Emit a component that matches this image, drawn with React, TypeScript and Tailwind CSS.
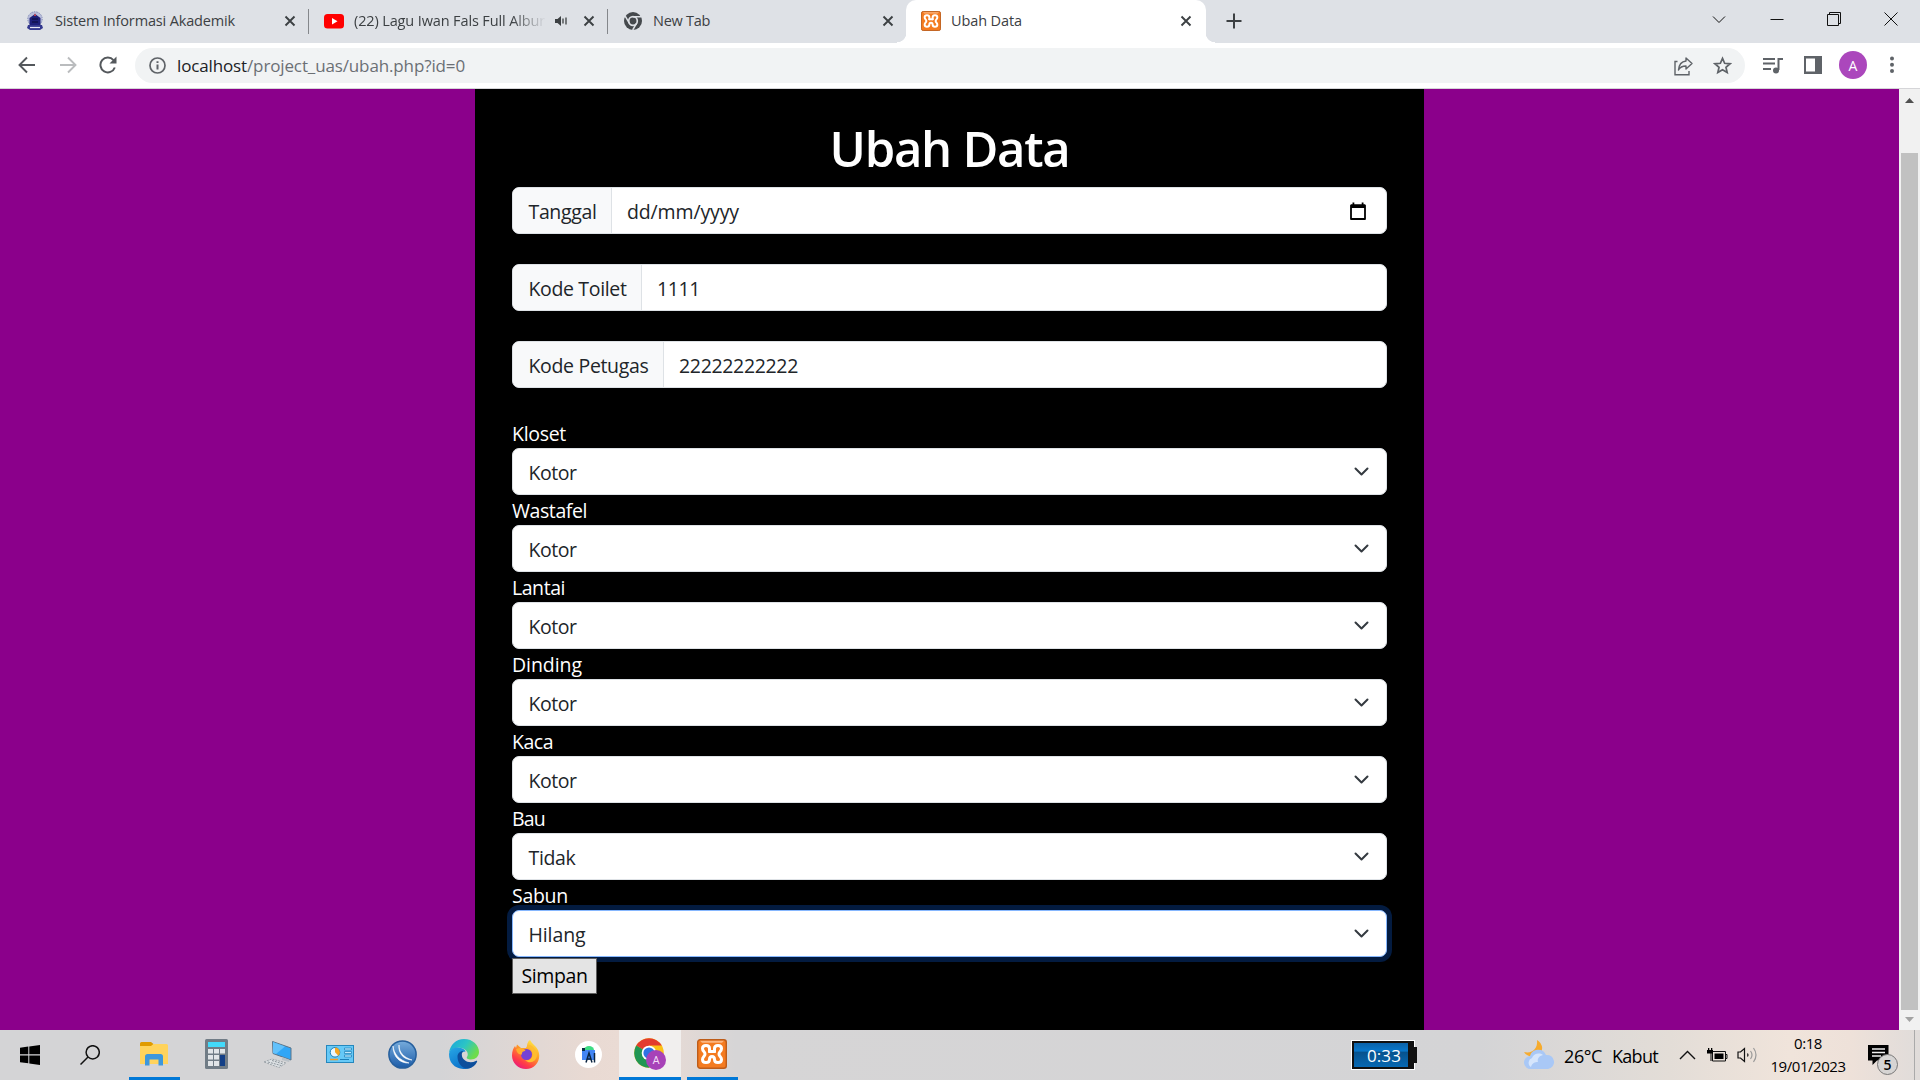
import { useLayoutEffect, useRef, useState, type ReactNode } from "react";

/** Single-line text whose tracking is adjusted so that it spans `w` pixels. */
function Fit({ w, children, className = "" }: { w: number; children: string; className?: string }) {
  const ref = useRef<HTMLSpanElement>(null);
  const [spacing, setSpacing] = useState(0);
  useLayoutEffect(() => {
    if (ref.current) {
      const natural = ref.current.getBoundingClientRect().width;
      setSpacing((w - natural) / children.length);
    }
  }, []);
  return (
    <span ref={ref} className={`inline-block whitespace-pre ${className}`} style={{ letterSpacing: spacing }}>
      {children}
    </span>
  );
}

function Close() {
  return (
    <svg width="12" height="12" viewBox="0 0 12 12" stroke="#3c4043" strokeWidth="1.9">
      <path d="M1.5 1.5l9 9M10.5 1.5l-9 9" />
    </svg>
  );
}

function CampusIcon() {
  return (
    <svg width="18" height="20" viewBox="0 0 18 20">
      <circle cx="9" cy="8" r="7.2" fill="#b9bfdc" stroke="#7d86b5" strokeDasharray="1.5 1" />
      <path d="M3.5 7l5.500-4 5.500 4v8h-11z" fill="#1d1f78" />
      <path d="M9 2l1 3H8z" fill="#d44" />
      <path d="M2 14h14l1 3-3 2H4l-3-2z" fill="#34398f" />
      <path d="M4 16.500h10" stroke="#e8e8f5" strokeWidth="1.200" />
      <path d="M6 8h6M6 11h6" stroke="#10124d" strokeWidth="1.500" />
    </svg>
  );
}

function YoutubeIcon() {
  return (
    <svg width="20" height="15" viewBox="0 0 20 15">
      <rect width="20" height="14.500" rx="3.500" fill="#f00" />
      <path d="M8 4l5.500 3.200L8 10.500z" fill="#fff" />
    </svg>
  );
}

function ChromeGrey() {
  return (
    <svg width="18" height="18" viewBox="0 0 18 18">
      <circle cx="9" cy="9" r="9" fill="#45494d" />
      <circle cx="9" cy="9" r="4.300" fill="#45494d" stroke="#dee1e6" strokeWidth="1.700" />
      <path d="M9 4.700h8.200M5.300 11.200L1.200 4.100M12.700 11.200L8.700 18" stroke="#dee1e6" strokeWidth="1.500" />
    </svg>
  );
}

function Xampp({ size }: { size: number }) {
  return (
    <svg width={size} height={size} viewBox="0 0 30 30">
      <rect x="0.700" y="0.700" width="28.600" height="28.600" rx="2.500" fill="#f47b20" stroke="#bd5c19" strokeWidth="1.400" />
      <path d="M3 1.800h24l-2 2H5z" fill="#ffc9a0" opacity=".75" />
      <g fill="none" stroke="#fff" strokeWidth="3" strokeLinecap="round" strokeLinejoin="round">
        <path d="M12.500 12.500V9.500C12.500 5.500 5.500 5.500 5.500 9.500c0 3 2.500 3 2.500 5.500s-2.500 2.500-2.500 5.500c0 4 7 4 7 0 0-2 .5-3 2.500-3s2.500 1 2.500 3c0 4 7 4 7 0 0-3-2.500-3-2.500-5.500s2.500-2.500 2.500-5.500c0-4-7-4-7 0v3" />
        <path d="M12.500 12.500h5" />
      </g>
    </svg>
  );
}

function Tab({ icon, children, trailing }: { icon: ReactNode; children: ReactNode; trailing?: ReactNode }) {
  return (
    <div className="flex h-full w-[299px] shrink-0 items-center pl-[15px] pr-[13px]">
      <div className="flex w-5 justify-center">{icon}</div>
      <div className="ml-2.5 flex min-w-0 flex-1 items-center overflow-hidden leading-5">{children}</div>
      {trailing}
      <Close />
    </div>
  );
}

function TabStrip() {
  return (
    <div className="flex h-[43px] bg-[#dee1e6] pl-2.5 text-[14.500px] text-[#3c4043]">
      <div className="flex h-[42px] w-[299px] items-center">
        <Tab icon={<CampusIcon />}><Fit w={180}>Sistem Informasi Akademik</Fit></Tab>
      </div>
      <div className="-ml-px flex h-[42px] w-[300px] items-center">
        <div className="h-[25px] w-px shrink-0 bg-[#84878b]" />
        <Tab
          icon={<YoutubeIcon />}
          trailing={
            <svg className="ml-2 mr-[15px]" width="14" height="14" viewBox="0 0 14 14" fill="none" stroke="#3c4043" strokeWidth="1.300">
              <path d="M1 5v4h2.500L7 12V2L3.500 5z" fill="#3c4043" stroke="none" />
              <path d="M9 4.500v5M12 3.500v7" />
            </svg>
          }
        >
          <div className="w-[193px] [mask-image:linear-gradient(to_right,black_82%,transparent)]">
            <Fit w={191}>(22) Lagu Iwan Fals Full Albur</Fit>
          </div>
        </Tab>
      </div>
      <div className="-ml-px flex h-[42px] w-[300px] items-center">
        <div className="h-[25px] w-px shrink-0 bg-[#84878b]" />
        <Tab icon={<ChromeGrey />}><Fit w={57}>New Tab</Fit></Tab>
      </div>
      <div className="-ml-2.5 flex h-[43px] items-end">
        <div className="h-2.5 w-[9px] bg-[radial-gradient(circle_at_0_0,transparent_9px,white_9.500px)]" />
        <div className="h-[43px] w-[300px] rounded-t-[10px] bg-white pb-px">
          <Tab icon={<Xampp size={20} />}><Fit w={71}>Ubah Data</Fit></Tab>
        </div>
        <div className="h-2.5 w-[9px] bg-[radial-gradient(circle_at_100%_0,transparent_9px,white_9.500px)]" />
      </div>
      <svg className="ml-[11px] mt-[13px]" width="16" height="16" viewBox="0 0 16 16" stroke="#3c4043" strokeWidth="2">
        <path d="M8 0.500v15M0.500 8h15" />
      </svg>
      <div className="ml-auto flex h-[37px] items-center">
        {[
          <path key="v" d="M1 4.500l6 6 6-6" />,
          <path key="m" d="M0.500 7.500h13" />,
          <path key="r" d="M0.500 2.500h11v11h-11zM2.500 2.500v-2h11v11h-2" />,
          <path key="c" d="M0.500 0.500l13 13M13.500 0.500l-13 13" />,
        ].map((shape, i) => (
          <div key={i} className="flex w-[57.300px] justify-center">
            <svg width="14" height="14" viewBox="0 0 14 14" fill="none" stroke="#111">{shape}</svg>
          </div>
        ))}
      </div>
    </div>
  );
}

function Toolbar() {
  return (
    <div className="flex h-[46px] items-center border-b border-[#d5d5d8] bg-white pb-px">
      <svg className="ml-[18px]" width="18" height="18" viewBox="0 0 18 18" fill="none" stroke="#54585c" strokeWidth="1.900">
        <path d="M17 9H2M9 1.500L1.500 9 9 16.500" />
      </svg>
      <svg className="ml-[23px]" width="18" height="18" viewBox="0 0 18 18" fill="none" stroke="#babcbe" strokeWidth="1.900">
        <path d="M1 9h15M9 1.500L16.500 9 9 16.500" />
      </svg>
      <svg className="ml-[22px]" width="18" height="18" viewBox="0 0 18 18" fill="none" stroke="#54585c" strokeWidth="2">
        <path d="M15.800 11.500A7.400 7.400 0 1 1 14.500 4.200" />
        <path d="M17.500 0.500v7h-7z" fill="#54585c" stroke="none" />
      </svg>
      <div className="ml-[18px] flex h-[35px] w-[1610px] items-center rounded-full bg-[#f1f3f4] pl-[14px] pr-[13px]">
        <svg width="17" height="17" viewBox="0 0 17 17" fill="none" stroke="#5f6368" strokeWidth="1.700">
          <circle cx="8.500" cy="8.500" r="7.500" />
          <path d="M8.500 7.500v5M8.500 4.200v1.900" strokeWidth="2" />
        </svg>
        <div className="ml-[11px] pt-0.5 text-[17px] leading-6">
          <Fit w={70} className="text-[#202124]">localhost</Fit>
          <Fit w={218} className="text-[#6b6f74]">/project_uas/ubah.php?id=0</Fit>
        </div>
        <svg className="ml-auto mt-0.5" width="19" height="19" viewBox="0 0 19 19" fill="none" stroke="#5f6368" strokeWidth="1.400">
          <path d="M3.500 4.500H1v13.300h14V14" />
          <path d="M12 1l6 5.500-6 5.500V9C8 9 6 10 4.500 13 5 7 8 4.500 12 4z" strokeLinejoin="round" />
        </svg>
        <svg className="ml-5" width="19" height="19" viewBox="0 0 24 24" fill="none" stroke="#5f6368" strokeWidth="2.200">
          <path d="M12 3l2.700 6.200 6.800.6-5.100 4.500 1.500 6.600L12 17.500l-5.900 3.400 1.500-6.600-5.100-4.500 6.800-.6z" />
        </svg>
      </div>
      <svg className="ml-[18px]" width="20" height="17" viewBox="0 0 20 17" fill="none" stroke="#5f6368" strokeWidth="2">
        <path d="M0 2h12M0 6.500h12M0 12h8M15.500 13V2H20" />
        <circle cx="13" cy="13.500" r="3" fill="#5f6368" stroke="none" />
      </svg>
      <svg className="ml-[21px]" width="18" height="18" viewBox="0 0 18 18">
        <path d="M0 0h18v18H0z" fill="#5f6368" />
        <path d="M2 2.500h9v13H2z" fill="#fff" />
      </svg>
      <div className="ml-[17px] flex size-7 items-center justify-center rounded-full bg-[#ab47bc] text-[14px] font-medium text-white">A</div>
      <svg className="ml-[22px]" width="6" height="18" viewBox="0 0 6 18" fill="#5f6368">
        <circle cx="3" cy="2.500" r="2" />
        <circle cx="3" cy="8.700" r="2" />
        <circle cx="3" cy="15" r="2" />
      </svg>
    </div>
  );
}

function InputGroup({ label, lw, boxClass, value, vw, icon }: { label: string; lw: number; boxClass: string; value: string; vw: number; icon?: ReactNode }) {
  return (
    <div className="mb-[30px] flex h-[47px] overflow-hidden rounded-[7px] border border-[#dee2e6] bg-white text-[#212529]">
      <div className={`flex items-center border-r border-[#dee2e6] bg-[#f8f9fa] pl-[15.500px] pt-0.5 ${boxClass}`}>
        <Fit w={lw}>{label}</Fit>
      </div>
      <div className="flex flex-1 items-center pl-[15px] pr-[19px] pt-0.5">
        <Fit w={vw}>{value}</Fit>
        <div className="ml-auto pb-px">{icon}</div>
      </div>
    </div>
  );
}

function SelectField({ label, lw, value, vw, focused }: { label: string; lw: number; value: string; vw: number; focused?: boolean }) {
  return (
    <div>
      <div className="h-[30px] pt-px text-white"><Fit w={lw}>{label}</Fit></div>
      <div
        className={`flex h-[47px] items-center rounded-[7px] border bg-white pl-[15.500px] pr-[17.500px] text-[#212529] ${
          focused ? "border-[#86b7fe] shadow-[0_0_0_5px_#031b40]" : "border-[#dee2e6]"
        }`}
      >
        <Fit w={vw} className="pt-0.5">{value}</Fit>
        <svg className="ml-auto" width="15" height="9" viewBox="0 0 15 9" fill="none" stroke="#343a40" strokeWidth="2" strokeLinecap="round" strokeLinejoin="round">
          <path d="M1.500 1.500l6 6 6-6" />
        </svg>
      </div>
    </div>
  );
}

const selects = [
  { label: "Kloset", lw: 54, value: "Kotor", vw: 48 },
  { label: "Wastafel", lw: 75, value: "Kotor", vw: 48 },
  { label: "Lantai", lw: 53, value: "Kotor", vw: 48 },
  { label: "Dinding", lw: 70, value: "Kotor", vw: 48 },
  { label: "Kaca", lw: 41, value: "Kotor", vw: 48 },
  { label: "Bau", lw: 33, value: "Tidak", vw: 47 },
  { label: "Sabun", lw: 56, value: "Hilang", vw: 57, focused: true },
];

function Page() {
  return (
    <div className="flex h-[941px] bg-[#8b008b]">
      <div className="ml-[475px] w-[949px] bg-black px-[37px] pt-[29px] text-[19.500px] leading-[30px]">
        <h1 className="mb-[9px] text-center text-[49px] font-semibold leading-[60px] text-white">
          <Fit w={240}>Ubah Data</Fit>
        </h1>
        <InputGroup
          label="Tanggal" lw={68} boxClass="w-[99px]" value="dd/mm/yyyy" vw={112}
          icon={
            <svg width="18" height="19" viewBox="0 0 18 19">
              <path d="M2 3.500h14v13.500H2z" fill="none" stroke="#000" strokeWidth="1.800" strokeLinejoin="round" />
              <path d="M2 2.500h14V6H2zM3.500 0.500h1.800v2H3.500zM12.700 0.500h1.800v2h-1.800z" />
            </svg>
          }
        />
        <InputGroup label="Kode Toilet" lw={98} boxClass="w-[129px]" value="1111" vw={43} />
        <InputGroup label="Kode Petugas" lw={120} boxClass="w-[151px]" value="22222222222" vw={119} />
        {selects.map((s) => <SelectField key={s.label} {...s} />)}
        <button className="relative mt-px flex h-9 w-[85px] items-center justify-center border border-[#5f5f5f] bg-[#e4e4e4] text-black">
          <Fit w={66}>Simpan</Fit>
        </button>
      </div>
      <div className="ml-auto flex w-[21px] flex-col items-center bg-[#f1f1f1]">
        <svg className="mt-[9px]" width="9" height="5" viewBox="0 0 9 5"><path d="M0 5l4.500-5L9 5z" fill="#505050" /></svg>
        <div className="mt-[50px] h-[857px] w-[17px] bg-[#c1c1c1]" />
        <svg className="mt-[7px]" width="9" height="5" viewBox="0 0 9 5"><path d="M0 0h9L4.500 5z" fill="#a3a3a3" /></svg>
      </div>
    </div>
  );
}

const FolderIcon = () => (
  <svg width="28" height="24" viewBox="0 0 28 24">
    <path d="M0 1.500Q0 0 1.500 0H11l2.500 2-2 3H0z" fill="#e09b00" />
    <path d="M0 4h11l2.500-2H26.500Q28 2 28 3.500V22H0z" fill="#ffd35c" />
    <path d="M5 23.500V14.500Q5 12 7.500 12h13Q23 12 23 14.500v9h-4.500v-6h-9v6z" fill="#3d97dc" />
  </svg>
);

const CalculatorIcon = () => (
  <svg width="23" height="30" viewBox="0 0 23 30">
    <rect width="23" height="30" rx="1.500" fill="#707c86" />
    <path d="M3 3h17v5H3z" fill="#42dafa" />
    <path d="M3 10h5v4.500H3zM9 10h5v4.500H9zM15 10h5v4.500h-5zM3 16h5v4.500H3zM9 16h5v4.500H9zM3 22h5v5H3zM9 22h5v5H9z" fill="#e1e5e8" />
    <path d="M15 16h5v11h-5z" fill="#123f87" />
  </svg>
);

const ComputerIcon = () => (
  <svg width="28" height="27" viewBox="0 0 28 27">
    <path d="M8.500 0.500L27 7v12L9 12.500z" fill="#31a6f6" stroke="#5d7488" />
    <path d="M9 1L21 5.500 12 13l-3-1z" fill="#62c1fb" />
    <path d="M18 16v3l7 2 1-2z" fill="#b9c1c8" />
    <path d="M0 21l8-3 14 4-7 4.500z" fill="#dfe3e6" stroke="#8b949b" strokeWidth=".8" strokeDasharray="2 1" />
    <path d="M4 21l13 3.500M8 19.500l11 3.500" stroke="#8b949b" strokeDasharray="2 1" />
  </svg>
);

const ControlPanelIcon = () => (
  <svg width="28" height="18" viewBox="0 0 28 18">
    <rect x=".5" y=".5" width="27" height="17" fill="#66c9f7" stroke="#2587bd" />
    <circle cx="9" cy="7.300" r="4.800" fill="#e9f6fd" stroke="#1c7fb8" />
    <path d="M9 7.300V2.500A4.800 4.800 0 0 1 12.400 10.700z" fill="#f5a623" />
    <path d="M18.500 3h7v2h-7zM18.500 6.500h7v2h-7zM18.500 10h7v2h-7z" fill="#bfe8fc" stroke="#1c7fb8" strokeWidth=".7" />
    <path d="M4 14.500h8" stroke="#f59a23" strokeWidth="1.500" />
    <path d="M14 14.500h9" stroke="#1c7fb8" />
  </svg>
);

const LinuxProxyIcon = () => (
  <svg width="29" height="29" viewBox="0 0 29 29">
    <defs>
      <linearGradient id="orb" x1="0" y1="0" x2="0" y2="1"><stop stopColor="#77acdc" /><stop offset="1" stopColor="#1b5ba8" /></linearGradient>
    </defs>
    <circle cx="14.500" cy="14.500" r="13.600" fill="url(#orb)" stroke="#265f9d" strokeWidth="1.500" />
    <path d="M5 6c1 8 6 14 16 17-8 .5-16-5-16-17z" fill="#fff" stroke="#fff" strokeWidth=".6" />
    <path d="M11 5c0 7 4 12 13 15-8-.5-14-6-13-15z" fill="#fff" stroke="#fff" strokeWidth=".6" />
  </svg>
);

const EdgeIcon = () => (
  <svg width="30" height="30" viewBox="0 0 30 30">
    <defs>
      <linearGradient id="edgeTop" x1="0" y1="0" x2="1" y2=".5"><stop stopColor="#18a3df" /><stop offset=".55" stopColor="#2cc5c4" /><stop offset="1" stopColor="#6edc4b" /></linearGradient>
      <linearGradient id="edgeLeft" x1="0" y1="0" x2=".6" y2="1"><stop stopColor="#27a7e5" /><stop offset="1" stopColor="#0a6fc9" /></linearGradient>
    </defs>
    <path d="M0 14C1 6 7 0 15 0c9 0 15 6.500 15 13 0 4.500-3.500 7.500-8 7.500-3 0-5-1-4-2.500C20 15 18 10 12 9 7 8 2 10 0 14z" fill="url(#edgeTop)" />
    <path d="M0 15C1 9 7 7.500 12 9c3 1 4.500 2.500 4.500 3.500-4 0-5.500 3-4.500 7 1 5 5 8 11 8.500-3 2-6 2-8.500 2C5 29.500 0 23 0 15z" fill="url(#edgeLeft)" />
    <path d="M8.500 17.500c0 6 4 12 10 12 5-.5 8-3.500 9.500-6.500.5-1-.3-1.500-1.200-1-6 3-14 0-14-6.500 0-1.500.6-2.500 1.500-3.500-3.500 0-5.800 2.500-5.800 5.500z" fill="#0c4e9c" />
  </svg>
);

const FirefoxIcon = () => (
  <svg width="28" height="29" viewBox="0 0 28 29">
    <defs>
      <linearGradient id="fox" x1=".8" y1="0" x2=".2" y2="1"><stop stopColor="#fff04a" /><stop offset=".4" stopColor="#ff9c25" /><stop offset=".75" stopColor="#ff3b48" /><stop offset="1" stopColor="#e31587" /></linearGradient>
    </defs>
    <path d="M18 0c2 4 6 6 8 10 4 9-2 19-12 19C6 29 0 23 0 15.500 0 11 1.500 8 3 6l1 2 1-3.500L9 8h5l1-2c0-2 1-5 3-6z" fill="url(#fox)" />
    <circle cx="14.500" cy="14.500" r="5.500" fill="#7542d5" />
    <path d="M4 9c4-2 8-1 9.500 2-2 0-4 1-3.500 3.500-3 0-5-1-6-5.500z" fill="#ffab2e" />
    <path d="M15 6c3 1 6 4 5.500 9C20 19 17 21 13 20c5 5 12 1 12-5 0-4-3-8-7-10z" fill="#ffbd2f" />
  </svg>
);

const AndroidStudioIcon = () => (
  <svg width="27" height="27" viewBox="0 0 27 27">
    <circle cx="13.500" cy="13.500" r="13.500" fill="#fff" />
    <path d="M9 9a5 4 0 0 1 10 0z" fill="#3ddc84" />
    <path d="M7 9h13v10H7z" fill="#4285f4" />
    <path d="M7 7h3v3H7z" fill="#083042" />
    <g stroke="#0b2540" strokeWidth="1.500" fill="none"><path d="M11 21.500L14 12l3 9.500M12 18h4M19.500 12v9.500" /></g>
  </svg>
);

const ChromeIcon = () => (
  <svg width="32" height="32" viewBox="0 0 32 32">
    <circle cx="15" cy="15" r="14.800" fill="#fbc116" />
    <path d="M15 15L2.200 7.600A14.800 14.800 0 0 1 27.800 7.600H15z" fill="#e33b2e" />
    <path d="M15 15L2.200 7.600A14.800 14.800 0 0 0 15 29.800l6.400-11z" fill="#219653" />
    <circle cx="15" cy="15" r="7.300" fill="#fff" />
    <circle cx="15" cy="15" r="5.600" fill="#2f73e4" />
    <circle cx="22" cy="22" r="10" fill="#a742b8" />
    <text x="22" y="26" textAnchor="middle" fontSize="11" fill="#f3dcf6" fontFamily="Roboto">A</text>
  </svg>
);

function TaskButton({ children, open, active }: { children: ReactNode; open?: boolean; active?: boolean }) {
  return (
    <div className={`flex h-[50px] w-[62px] flex-col items-center ${active ? "bg-[#f1efee]" : ""}`}>
      <div className="flex h-[47px] items-center pt-px">{children}</div>
      {(open || active) && <div className={`h-[3px] bg-[#0078d7] ${active ? "w-full" : "w-[51px]"}`} />}
    </div>
  );
}

function Taskbar() {
  return (
    <div className="flex h-[50px] items-center bg-[linear-gradient(90deg,#d4d4d6_0,#d4d4d6_440px,#e9dad3_590px,#ebdcd5_650px,#d6d5d6_735px,#d4d4d6_1480px,#e3ddd7_1670px,#f0e4db_1790px,#eee1d9_1850px,#e0dcda_1920px)] text-[18px] text-black">
      <div className="flex w-[60px] justify-center">
        <svg width="20" height="20" viewBox="0 0 20 20"><path d="M0 2.800L8.300 1.600V9.300H0zM9.300 1.400L20 0v9.300H9.300zM0 10.400h8.300v7.900L0 17.200zM9.300 10.400H20V20L9.300 18.500z" /></svg>
      </div>
      <div className="flex w-[60px] justify-center">
        <svg width="20" height="20" viewBox="0 0 20 20" fill="none" stroke="#111" strokeWidth="1.500"><circle cx="12.700" cy="7.300" r="6.600" /><path d="M8 12L.5 19.500" /></svg>
      </div>
      <div className="ml-[3px] flex">
        <TaskButton open><FolderIcon /></TaskButton>
        <TaskButton><CalculatorIcon /></TaskButton>
        <TaskButton><ComputerIcon /></TaskButton>
        <TaskButton><ControlPanelIcon /></TaskButton>
        <TaskButton><LinuxProxyIcon /></TaskButton>
        <TaskButton><EdgeIcon /></TaskButton>
        <TaskButton><FirefoxIcon /></TaskButton>
        <TaskButton><AndroidStudioIcon /></TaskButton>
        <TaskButton active><ChromeIcon /></TaskButton>
        <TaskButton open><Xampp size={30} /></TaskButton>
      </div>
      <div className="ml-[609px] flex items-center">
        <div className="flex h-[28px] w-[62px] items-center justify-center border-2 border-r-[6px] border-[#111] bg-[linear-gradient(#0b62a8,#0878cc_35%,#07518c_36%,#0668b3)] pl-1.5 pt-0.5 text-[17px] text-white outline outline-white">
          <Fit w={34}>0:33</Fit>
        </div>
        <div className="h-4 w-[3px] bg-[#111]" />
      </div>
      <svg className="ml-[107px]" width="31" height="30" viewBox="0 0 31 30">
        <path d="M13 0c6 4 7 10 2 14C10 18 3 17 0 12c8 2 14-3 13-12z" fill="#f6ab2e" />
        <path d="M7 29a6.500 6.500 0 0 1-1-13 8.500 8.500 0 0 1 16-1 7 7 0 0 1 2 14z" fill="#a9c8f6" />
        <path d="M7 27a5 5 0 0 1 1-9 7 7 0 0 1 11-3c-4 1-6 4-5 7-3 0-6 1-7 5z" fill="#d5e5fc" />
      </svg>
      <div className="ml-[9px] flex pt-0.5"><Fit w={38}>26°C</Fit><Fit w={46} className="ml-2.5">Kabut</Fit></div>
      <svg className="ml-[21px]" width="17" height="10" viewBox="0 0 17 10" fill="none" stroke="#111" strokeWidth="1.400"><path d="M1 9l7.500-7.500L16 9" /></svg>
      <svg className="ml-[11px]" width="21" height="15" viewBox="0 0 21 15">
        <path d="M5.500 3.500h13v9.500h-13zM18.500 6.500h1.500v4h-1.500" fill="none" stroke="#111" />
        <path d="M7.500 5.500h9v5.500h-9z" />
        <path d="M0 2h6v3.500H4.500V13h-1V5.500H0zM1 0h1.300v2H1zM4 0h1.300v2H4z" />
      </svg>
      <svg className="ml-[9px]" width="21" height="18" viewBox="0 0 21 18" fill="none" stroke="#111" strokeWidth="1.200">
        <path d="M1 6v6h2.500l4 3.500v-13l-4 3.500zM10.500 7.500q1 1.500 0 3" />
        <path d="M13.500 5q3 4 0 8M16.500 2q5 7 0 14" stroke="#999" />
      </svg>
      <div className="ml-3 flex w-[76px] flex-col items-center text-[15px] leading-[23px]">
        <Fit w={28}>0:18</Fit>
        <Fit w={75}>19/01/2023</Fit>
      </div>
      <div className="relative ml-[22px] mt-2.5 h-[30px] w-[30px]">
        <svg width="21" height="20" viewBox="0 0 21 20"><path d="M0 0h20.500v15.500H9L4.500 20v-4.500H0z" /><path d="M4 4h13M4 7.500h13M4 11h9" stroke="#eee" strokeWidth="1.300" /></svg>
        <div className="absolute left-[9px] top-[9px] flex size-[21px] items-center justify-center rounded-full border border-[#777] bg-[#d6d4d3] text-[14px] font-semibold">5</div>
      </div>
      <div className="ml-auto mr-[5px] h-full w-px bg-[#aaa]" />
    </div>
  );
}

export default function App() {
  return (
    <div className="h-[1080px] w-[1920px] overflow-hidden font-['Open_Sans',sans-serif]">
      <TabStrip />
      <Toolbar />
      <Page />
      <Taskbar />
    </div>
  );
}
